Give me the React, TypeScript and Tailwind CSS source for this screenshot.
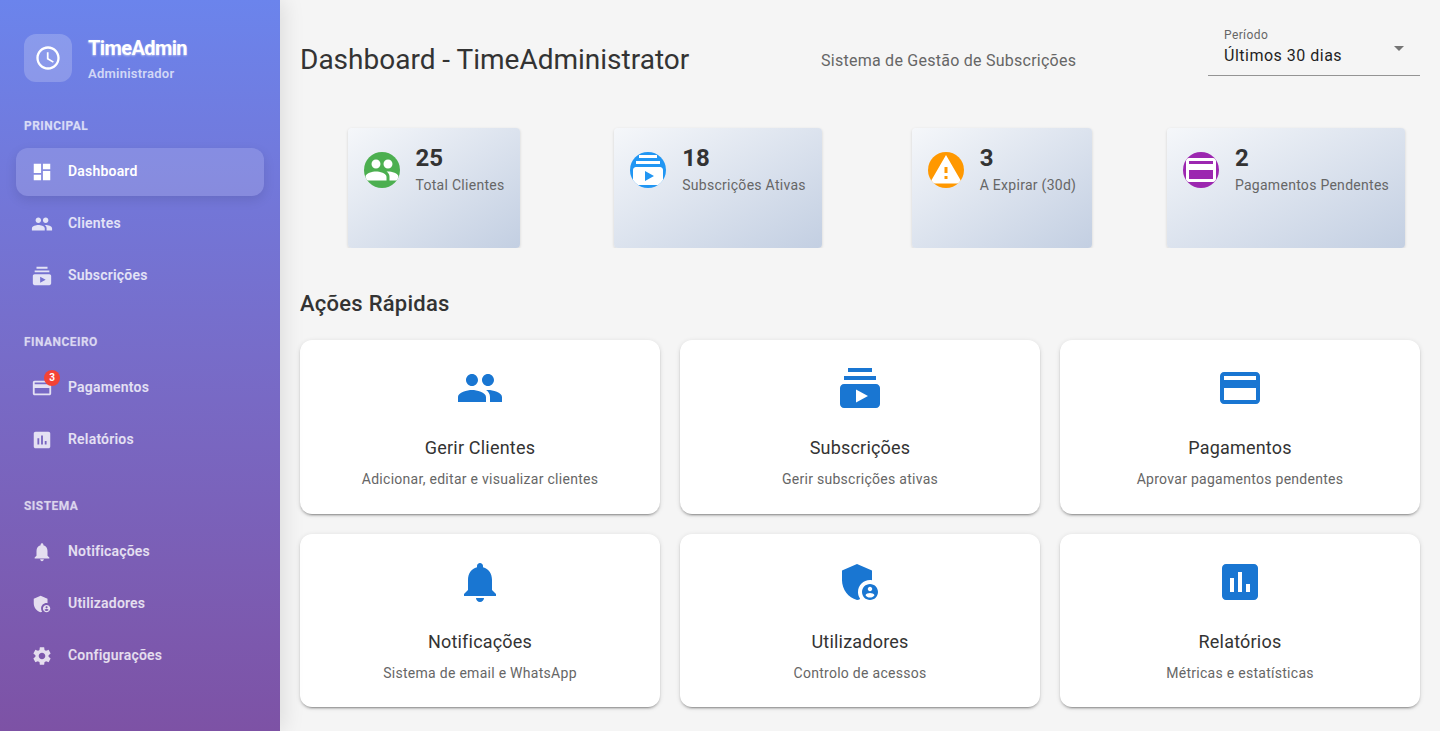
import type { ReactNode } from "react";

const paths = {
  dashboard: "M3 13h8V3H3zm0 8h8v-6H3zm10 0h8V11h-8zm0-18v6h8V3z",
  people:
    "M16 11c1.66 0 2.99-1.34 2.99-3S17.66 5 16 5c-1.66 0-3 1.34-3 3s1.34 3 3 3m-8 0c1.66 0 2.99-1.34 2.99-3S9.66 5 8 5C6.34 5 5 6.34 5 8s1.34 3 3 3m0 2c-2.33 0-7 1.17-7 3.5V19h14v-2.5c0-2.33-4.67-3.5-7-3.5m8 0c-.29 0-.62.02-.97.05 1.16.84 1.97 1.97 1.97 3.45V19h6v-2.5c0-2.33-4.67-3.5-7-3.5",
  subscriptions:
    "M20 8H4V6h16v2zm-2-6H6v2h12V2zm4 10v8c0 1.1-.9 2-2 2H4c-1.1 0-2-.9-2-2v-8c0-1.1.9-2 2-2h16c1.1 0 2 .9 2 2zm-6 4-6-3.27v6.53L16 16z",
  payment:
    "M20 4H4c-1.11 0-1.99.89-1.99 2L2 18c0 1.11.89 2 2 2h16c1.11 0 2-.89 2-2V6c0-1.11-.89-2-2-2m0 14H4v-6h16zm0-10H4V6h16z",
  assessment:
    "M19 3H5c-1.1 0-2 .9-2 2v14c0 1.1.9 2 2 2h14c1.1 0 2-.9 2-2V5c0-1.1-.9-2-2-2M9 17H7v-7h2zm4 0h-2V7h2zm4 0h-2v-4h2z",
  bell: "M12 22c1.1 0 2-.9 2-2h-4c0 1.1.89 2 2 2m6-6v-5c0-3.07-1.64-5.64-4.5-6.32V4c0-.83-.67-1.5-1.5-1.5s-1.5.67-1.5 1.5v.68C7.63 5.36 6 7.92 6 11v5l-2 2v1h16v-1z",
  admin:
    "M17 11c.34 0 .67.04 1 .09V6.27L10.5 3 3 6.27v4.91c0 4.54 3.2 8.79 7.5 9.82.55-.13 1.08-.32 1.6-.55-.69-.98-1.1-2.17-1.1-3.45 0-3.31 2.69-6 6-6M17 13c-2.21 0-4 1.79-4 4s1.79 4 4 4 4-1.79 4-4-1.79-4-4-4m0 1.38c.62 0 1.12.51 1.12 1.12s-.51 1.12-1.12 1.12-1.12-.51-1.12-1.12.5-1.12 1.12-1.12m0 5.37c-.93 0-1.74-.46-2.24-1.17.05-.72 1.51-1.08 2.24-1.08s2.19.36 2.24 1.08c-.5.71-1.31 1.17-2.24 1.17",
  settings:
    "M19.14 12.94c.04-.3.06-.61.06-.94 0-.32-.02-.64-.07-.94l2.03-1.58c.18-.14.23-.41.12-.61l-1.92-3.32c-.12-.22-.37-.29-.59-.22l-2.39.96c-.5-.38-1.03-.7-1.62-.94l-.36-2.54c-.04-.24-.24-.41-.48-.41h-3.84c-.24 0-.43.17-.47.41l-.36 2.54c-.59.24-1.13.57-1.62.94l-2.39-.96c-.22-.08-.47 0-.59.22L2.74 8.87c-.12.21-.08.47.12.61l2.03 1.58c-.05.3-.09.63-.09.94s.02.64.07.94l-2.03 1.58c-.18.14-.23.41-.12.61l1.92 3.32c.12.22.37.29.59.22l2.39-.96c.5.38 1.03.7 1.62.94l.36 2.54c.05.24.24.41.48.41h3.84c.24 0 .44-.17.47-.41l.36-2.54c.59-.24 1.13-.56 1.62-.94l2.39.96c.22.08.47 0 .59-.22l1.92-3.32c.12-.22.07-.47-.12-.61zM12 15.6c-1.98 0-3.6-1.62-3.6-3.6s1.62-3.6 3.6-3.6 3.6 1.62 3.6 3.6-1.62 3.6-3.6 3.6",
  warning: "M1 21h22L12 2 1 21zm12-3h-2v-2h2v2zm0-4h-2v-4h2v4z",
  clock:
    "M11.99 2C6.47 2 2 6.48 2 12s4.47 10 9.99 10C17.52 22 22 17.52 22 12S17.52 2 11.99 2M12 20c-4.42 0-8-3.58-8-8s3.58-8 8-8 8 3.58 8 8-3.58 8-8 8M12.5 7H11v6l5.25 3.15.75-1.23-4.5-2.67z",
};

type IconName = keyof typeof paths;

function Icon({ name, className }: { name: IconName; className: string }) {
  return (
    <svg viewBox="0 0 24 24" fill="currentColor" className={className}>
      <path d={paths[name]} />
    </svg>
  );
}

function NavItem({ icon, label, active, badge }: { icon: IconName; label: string; active?: boolean; badge?: string }) {
  return (
    <div
      className={
        active
          ? "flex h-12 items-center rounded-xl bg-white/15 px-[14px] text-white shadow-[0_4px_12px_rgba(0,0,0,0.1)]"
          : "flex h-12 items-center rounded-xl px-[14px] text-white/80"
      }
    >
      <div className="relative flex w-6 justify-center">
        <Icon name={icon} className="h-[22px] w-[22px]" />
        {badge && (
          <span className="absolute -top-[7px] left-[14px] flex h-4 w-4 items-center justify-center rounded-full bg-[#f44336] text-[10px] font-bold leading-none text-white">
            {badge}
          </span>
        )}
      </div>
      <span className="mb-[2px] ml-[14px] text-sm font-semibold tracking-[0.2px]">{label}</span>
    </div>
  );
}

function NavSection({ title, children }: { title: string; children: ReactNode }) {
  return (
    <div className="mb-8 last:mb-0">
      <div className="mb-[14px] px-6 pt-[2px] text-xs font-bold uppercase leading-4 tracking-[0.45px] text-white/60 [text-shadow:0_0_1px_rgba(255,255,255,0.4)]">
        {title}
      </div>
      <div className="flex flex-col gap-1 px-4">{children}</div>
    </div>
  );
}

function StatCard({ icon, color, value, label }: { icon: IconName; color: string; value: string; label: string }) {
  return (
    <div className="flex h-[120px] gap-4 rounded bg-gradient-to-br from-[#f5f7fa] to-[#c3cfe2] p-4 shadow-[0_1px_3px_rgba(0,0,0,0.15)] [clip-path:inset(-4px_-4px_0_-4px)]">
      <div className={`mt-2 flex h-9 w-9 items-center justify-center overflow-hidden rounded-full text-white ${color}`}>
        <Icon name={icon} className="h-9 w-9 shrink-0" />
      </div>
      <div>
        <div className="text-2xl font-bold leading-7 text-[#333]">{value}</div>
        <div className="mt-[3px] text-sm leading-5 tracking-[0.28px] text-[#666]">{label}</div>
      </div>
    </div>
  );
}

function ActionCard({ icon, title, text }: { icon: IconName; title: string; text: string }) {
  return (
    <div className="flex flex-col items-center rounded-xl bg-white px-6 pb-[24.5px] pt-6 text-center shadow-[0_3px_1px_-2px_rgba(0,0,0,0.2),0_2px_2px_0_rgba(0,0,0,0.14),0_1px_5px_0_rgba(0,0,0,0.12)]">
      <Icon name={icon} className="mb-[22px] h-12 w-12 text-[#1976d2]" />
      <div className="mb-[6.5px] text-lg leading-[28.5px] tracking-[0.2px] text-[#333]">{title}</div>
      <div className="text-sm leading-5 tracking-[0.28px] text-[#666]">{text}</div>
    </div>
  );
}

export default function App() {
  return (
    <div className="flex h-screen overflow-hidden bg-[#f5f5f5] font-['Roboto',sans-serif]">
      <aside className="z-10 h-full w-[280px] shrink-0 bg-gradient-to-b from-[#6b84ec] to-[#7d52a5] shadow-[4px_0_20px_rgba(0,0,0,0.1)]">
        <div className="flex gap-4 px-6 pb-[34px] pt-[34px]">
          <div className="flex h-12 w-12 items-center justify-center rounded-xl bg-white/20 text-white">
            <Icon name="clock" className="h-7 w-7" />
          </div>
          <div className="h-12">
            <div className="mt-[2px] text-xl font-bold leading-[24px] tracking-[-0.6px] text-white [text-shadow:0_1px_2px_rgba(255,255,255,0.5)]">
              TimeAdmin
            </div>
            <div className="mt-[5px] text-[13px] font-semibold leading-[18px] tracking-[0.25px] text-white/70">Administrador</div>
          </div>
        </div>
        <NavSection title="Principal">
          <NavItem icon="dashboard" label="Dashboard" active />
          <NavItem icon="people" label="Clientes" />
          <NavItem icon="subscriptions" label="Subscrições" />
        </NavSection>
        <NavSection title="Financeiro">
          <NavItem icon="payment" label="Pagamentos" badge="3" />
          <NavItem icon="assessment" label="Relatórios" />
        </NavSection>
        <NavSection title="Sistema">
          <NavItem icon="bell" label="Notificações" />
          <NavItem icon="admin" label="Utilizadores" />
          <NavItem icon="settings" label="Configurações" />
        </NavSection>
      </aside>

      <main className="min-w-0 flex-1 px-5 pt-5">
        <div className="mb-[52px] flex items-end justify-between">
          <h1 className="text-[28px] leading-8 text-[#333]">Dashboard - TimeAdministrator</h1>
          <p className="-mb-[1px] text-base leading-8 tracking-[0.25px] text-[#666]">Sistema de Gestão de Subscrições</p>
          <div className="relative h-14 w-[212px] border-b border-[#949494] px-4 pt-2">
            <div className="text-xs leading-[15px] tracking-[0.4px] text-[#666]">Período</div>
            <div className="mt-[1px] text-base leading-[24px] tracking-[0.5px] text-[#1f1f1f]">Últimos 30 dias</div>
            <svg viewBox="0 0 24 24" fill="currentColor" className="absolute right-[9px] top-4 h-6 w-6 text-[#757575]">
              <path d="M7 10l5 5 5-5z" />
            </svg>
          </div>
        </div>

        <div className="mb-10 grid grid-cols-4 justify-items-center gap-4">
          <StatCard icon="people" color="bg-[#4caf50]" value="25" label="Total Clientes" />
          <StatCard icon="subscriptions" color="bg-[#2196f3]" value="18" label="Subscrições Ativas" />
          <StatCard icon="warning" color="bg-[#ff9800]" value="3" label="A Expirar (30d)" />
          <StatCard icon="payment" color="bg-[#9c27b0]" value="2" label="Pagamentos Pendentes" />
        </div>

        <h2 className="mb-5 text-[22px] font-medium leading-8 tracking-[0.25px] text-[#333]">Ações Rápidas</h2>
        <div className="grid grid-cols-3 gap-5">
          <ActionCard icon="people" title="Gerir Clientes" text="Adicionar, editar e visualizar clientes" />
          <ActionCard icon="subscriptions" title="Subscrições" text="Gerir subscrições ativas" />
          <ActionCard icon="payment" title="Pagamentos" text="Aprovar pagamentos pendentes" />
          <ActionCard icon="bell" title="Notificações" text="Sistema de email e WhatsApp" />
          <ActionCard icon="admin" title="Utilizadores" text="Controlo de acessos" />
          <ActionCard icon="assessment" title="Relatórios" text="Métricas e estatísticas" />
        </div>
      </main>
    </div>
  );
}
